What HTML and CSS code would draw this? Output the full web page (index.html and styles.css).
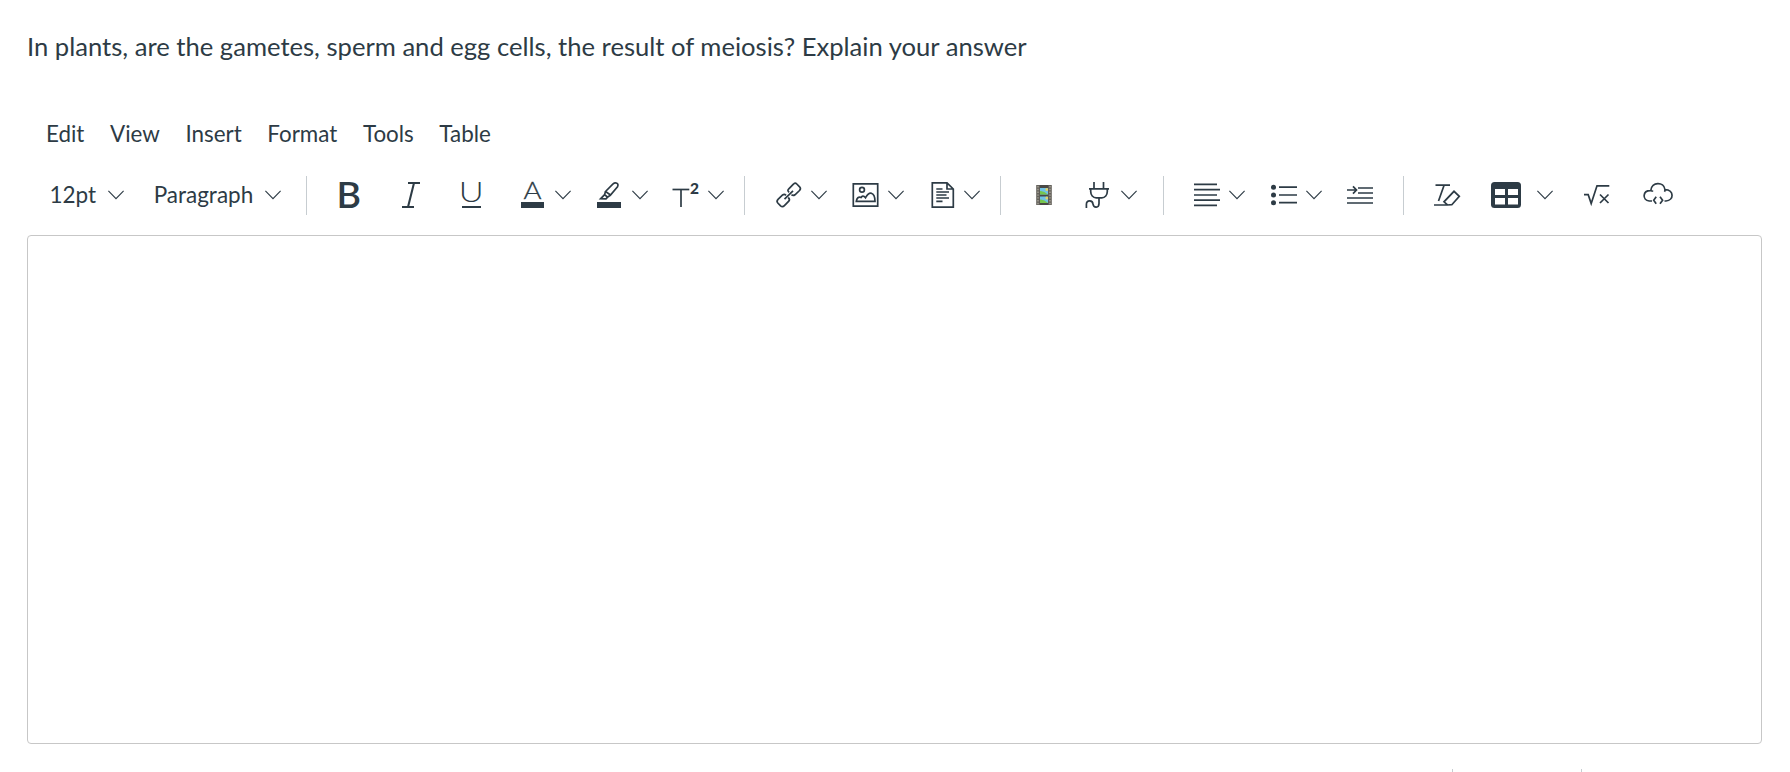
FILE: index.html
```html
<!DOCTYPE html>
<html lang="en">
<head>
  <meta charset="UTF-8">
  <meta name="viewport" content="width=device-width, initial-scale=1.0">
  <title>Question</title>
  <link rel="stylesheet" href="styles.css">
</head>
<body>
  <svg class="defs">
    <symbol id="chevron" viewBox="0 0 16 10"><path d="M.4 .8 8 8.6 15.6 .8"/></symbol>
  </svg>

  <div class="question">
    <p class="question-text">In plants, are the gametes, sperm and egg cells, the result of meiosis? Explain your answer</p>

    <div class="menubar">
      <span>Edit</span>
      <span>View</span>
      <span>Insert</span>
      <span>Format</span>
      <span>Tools</span>
      <span>Table</span>
    </div>

    <div class="toolbar">
      <div class="group group-text">
        <div class="select">12pt <svg class="chevron"><use href="#chevron"/></svg></div>
        <div class="select">Paragraph <svg class="chevron"><use href="#chevron"/></svg></div>
      </div>

      <div class="group group-style">
        <div class="btn">
          <svg class="icon" viewBox="0 0 26 26"><text class="bold" x="-0.4" y="26" textLength="24.5" lengthAdjust="spacingAndGlyphs">B</text></svg>
        </div>
        <div class="btn">
          <svg class="icon" viewBox="0 0 26 26"><g stroke-width="2"><line x1="10" y1="1" x2="22" y2="1"/><line x1="4" y1="25" x2="16" y2="25"/><line x1="16" y1="1" x2="10" y2="25"/></g></svg>
        </div>
        <div class="btn">
          <svg class="icon" viewBox="0 0 26 26"><text class="thin" x="-0.2" y="19.7" textLength="25" lengthAdjust="spacingAndGlyphs">U</text><rect class="solid" x="3" y="24" width="19" height="2"/></svg>
        </div>
        <div class="btn split">
          <svg class="icon" viewBox="0 0 26 26"><text class="letter" x="3.5" y="17.2" textLength="18" lengthAdjust="spacingAndGlyphs">A</text><rect class="solid" x="1" y="20" width="23" height="6"/></svg>
          <svg class="chevron"><use href="#chevron"/></svg>
        </div>
        <div class="btn split">
          <svg class="icon" viewBox="0 0 26 26"><path d="M8.5 9.5 15.8 2.2C18.5 -.2 22.3 1.2 20.5 4.8L13.5 13 8.5 9.5ZM8.5 9.5 7.6 12.6 10.6 15.2 13.5 13M7.6 12.6 3.6 16.8 9 16.9 10.6 15.2"/><rect class="solid" x="0" y="20" width="24" height="6"/></svg>
          <svg class="chevron"><use href="#chevron"/></svg>
        </div>
        <div class="btn split">
          <svg class="icon" viewBox="0 0 26 26"><line x1="-.5" y1="7.5" x2="16.3" y2="7.5"/><line x1="8" y1="8" x2="8" y2="25"/><text class="sup" x="17" y="12">2</text></svg>
          <svg class="chevron"><use href="#chevron"/></svg>
        </div>
      </div>

      <div class="group group-insert">
        <div class="btn split">
          <svg class="icon" viewBox="0 0 26 26"><path d="M13.2 10.2C11.5 9 11.6 8 12.8 6.8L17.4 2.2Q19 .2 20.8 2L23.6 4.8Q25.3 6.7 23.5 8.5L19 12.8Q17 14.2 15.5 12.6M12.2 15.5C13.9 17 13.8 18 12.8 19.2L8.4 23.6Q6.5 25.6 4.6 23.8L1.8 21Q.2 19.2 2 17.4L6.6 13Q8.4 11.6 10 13.4M8.5 17.2 17 8.8"/></svg>
          <svg class="chevron"><use href="#chevron"/></svg>
        </div>
        <div class="btn split">
          <svg class="icon" viewBox="0 0 26 26"><path d="M.3 1.8H24.7V24.2H.3ZM3.3 19.3H22C22 14.5 21 12 18.2 11.2C15 10.8 14 13 12.5 15.8C10.5 13.2 9 14 8.1 15.5C5.5 14.4 3.7 16 3.3 19.3Z"/><circle cx="9" cy="7.8" r="2.4"/></svg>
          <svg class="chevron"><use href="#chevron"/></svg>
        </div>
        <div class="btn split">
          <svg class="icon" viewBox="0 0 26 26"><path d="M3.3 .8H18L24.3 7V25.2H3.3ZM18 .8V7H24.3M7.3 7H13.5M7.3 10H20M7.3 13H17.5M7.3 16H20M7.3 19.3H13.5"/></svg>
          <svg class="chevron"><use href="#chevron"/></svg>
        </div>
      </div>

      <div class="group group-apps">
        <div class="btn">
          <svg class="film" viewBox="0 0 16 20">
            <rect x="2" y="0" width="12" height="20" fill="#4a4945"/>
            <rect x="4" y="3" width="8" height="6.5" fill="#6fc3e6"/><path d="M4 6Q8 5.5 12 9.5H4Z" fill="#76c64d"/><circle cx="10.8" cy="4.5" r="1.5" fill="#dfd36a"/>
            <rect x="4" y="11.5" width="8" height="6.5" fill="#6fc3e6"/><path d="M4 14.5Q8 14 12 18H4Z" fill="#76c64d"/><circle cx="10.8" cy="13" r="1.5" fill="#dfd36a"/>
            <path d="M2 0V20M14 0V20" stroke="#64625c" stroke-width="3.6"/>
            <path d="M2 1V20M14 1V20" stroke="#99958b" stroke-width="1.8" stroke-dasharray="1.4 1.4"/>
          </svg>
        </div>
        <div class="btn split">
          <svg class="icon" viewBox="0 0 26 26"><path d="M8 0V6M17.5 0V6M3 6.8H23M4.7 7V9.5C4.7 13 7 15.8 10.2 15.8H15.8C19 15.8 21.3 13 21.3 9.5V7M13 16V21.5C13 26.2 7.7 26.2 7 22.2C6.7 17.8.4 17.7.4 22.5V26"/></svg>
          <svg class="chevron"><use href="#chevron"/></svg>
        </div>
      </div>

      <div class="group group-lists">
        <div class="btn split">
          <svg class="icon" viewBox="0 0 26 26"><path d="M0 2.4H23M0 7.7H26M0 13H23M0 18.2H26M0 23.4H23"/></svg>
          <svg class="chevron"><use href="#chevron"/></svg>
        </div>
        <div class="btn split">
          <svg class="icon" viewBox="0 0 26 26"><path d="M8 5.2H26M8 13H26M8 20.7H26"/><g class="solid"><circle cx="2.5" cy="5.2" r="2.5"/><circle cx="2.5" cy="13" r="2.5"/><circle cx="2.5" cy="20.7" r="2.5"/></g></svg>
          <svg class="chevron"><use href="#chevron"/></svg>
        </div>
        <div class="btn">
          <svg class="icon" viewBox="0 0 26 26"><path d="M0 8H9.5M6 4.3 9.5 8 6 11.7M11 6H26M11 11H26M0 16H26M0 21H26"/></svg>
        </div>
      </div>

      <div class="group group-extra">
        <div class="btn">
          <svg class="icon" viewBox="0 0 26 26"><path d="M1.5 3.2H16M10 3.5 4.5 19M0 23H17.5M17.8 22.7 13.5 23 10 19.8 20 9.3 25.3 14.3Z"/></svg>
        </div>
        <div class="btn split split-table">
          <svg class="icon icon-wide" viewBox="0 0 30 26"><rect class="solid" width="30" height="26" rx="3.5"/><path class="cells" d="M4 7H14V13H4ZM17 7H27V13H17ZM4 16H14V22.5H4ZM17 16H27V22.5H17Z"/></svg>
          <svg class="chevron"><use href="#chevron"/></svg>
        </div>
        <div class="btn">
          <svg class="icon" viewBox="0 0 26 26"><path d="M0 12.7H4.2L7.2 21.5 13 3.8H25.3M16 12.5 24.5 21M24.5 12.5 16 21"/></svg>
        </div>
        <div class="btn">
          <svg class="icon icon-wide" viewBox="0 0 30 26"><path d="M9 19H6.2C-1 18-.6 8.3 7.8 8.6C8.4-.6 21-.6 22 7.6C31.5 7.8 31 18.5 23 19H21.5M22 7.6Q22 9 21.5 9.8M7.8 8.6Q9.3 8.7 10 9.6M13.2 14.8 10.7 18.3 13.2 21.8M17 14.8 19.6 18.3 17 21.8"/></svg>
        </div>
      </div>
    </div>

    <div class="editor"></div>

    <div class="statusbar">
      <span class="status-sep"></span>
      <span class="status-sep"></span>
    </div>
  </div>
</body>
</html>
```
FILE: styles.css
```css
* {
  box-sizing: border-box;
}

body {
  margin: 0;
  height: 772px;
  overflow: hidden;
  background: #fff;
  color: #2d3b45;
  font-family: Lato, "Liberation Sans", sans-serif;
}

.defs {
  display: none;
}

.question {
  display: flex;
  flex-direction: column;
  height: 772px;
  padding: 0 28px 0 27px;
}

.question-text {
  margin: 0;
  height: 94px;
  font-size: 25.62px;
  line-height: 93px;
  white-space: nowrap;
}

.menubar {
  display: flex;
  gap: 25.6px;
  height: 80px;
  padding-left: 19px;
  font-size: 22.4px;
  line-height: 79px;
}

.toolbar {
  display: flex;
  height: 61px;
  padding-top: 2px;
}

.group {
  display: flex;
  align-items: center;
  height: 39px;
  padding-left: 12.5px;
  padding-bottom: 1px;
  border-right: 1px solid #c7cdd1;
}

.group-text {
  width: 280px;
  padding-left: 22.5px;
  gap: 30px;
}

.group-style {
  width: 438px;
}

.group-insert {
  width: 256px;
  padding-left: 13.5px;
}

.group-apps {
  width: 163px;
}

.group-lists {
  width: 240px;
}

.group-extra {
  border-right: none;
}

.select {
  display: flex;
  align-items: center;
  gap: 11.5px;
  font-size: 22.5px;
  line-height: 38px;
}

.btn {
  display: flex;
  flex: none;
  align-items: center;
  justify-content: center;
  width: 61px;
}

.split {
  justify-content: flex-start;
  gap: 9px;
  width: 76.7px;
  padding-left: 17.5px;
}

.split-table {
  gap: 16px;
  width: 89px;
  padding-left: 13.5px;
}

.group-apps .btn:first-child {
  width: 55px;
  padding-left: 6px;
}

.icon {
  flex: none;
  width: 26px;
  height: 26px;
  overflow: visible;
  fill: none;
  stroke: #2d3b45;
  stroke-width: 1.7;
}

.icon-wide {
  width: 30px;
}

.icon text {
  fill: #2d3b45;
  stroke: none;
}

.icon .solid {
  fill: #2d3b45;
  stroke: none;
}

.icon .cells {
  fill: #fff;
  stroke: none;
}

.bold {
  font-size: 36px;
  font-weight: 600;
}

.thin {
  font-size: 27.5px;
  font-weight: 300;
}

.icon .letter {
  font-size: 24px;
  font-weight: 300;
  stroke: #2d3b45;
  stroke-width: .3;
}

.sup {
  font-size: 15.5px;
  font-weight: 900;
}

.film {
  width: 16px;
  height: 20px;
}

.chevron {
  flex: none;
  width: 16px;
  height: 10px;
  fill: none;
  stroke: #2d3b45;
  stroke-width: 1.1;
}

.editor {
  height: 509px;
  border: 1px solid #c7c7c7;
  border-radius: 4px;
}

.statusbar {
  display: flex;
  justify-content: flex-end;
  gap: 128px;
  padding: 25px 180px 0 0;
}

.status-sep {
  width: 1px;
  height: 3px;
  background: #c7cdd1;
}
```
